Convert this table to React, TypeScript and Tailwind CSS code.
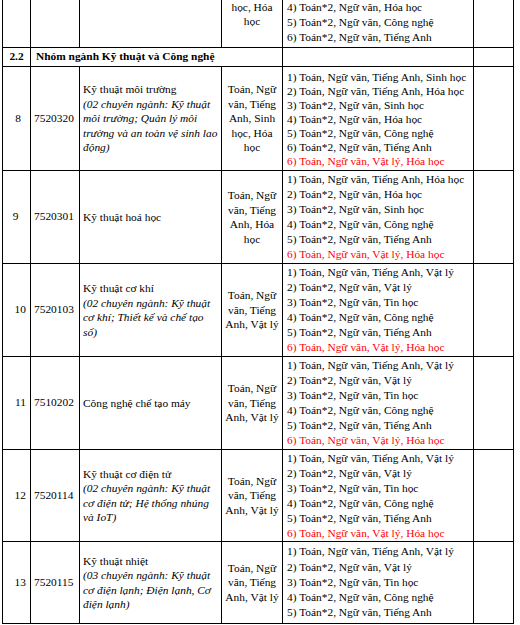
import React from 'react';
import { clsx } from 'clsx';

type Major = {
  no: string;
  numCls: string;
  code: string;
  name: string;
  note?: string[];
  group: string[];
  combos: string[];
  extra?: string;
  lead: string;
};

const tech = [
  '1) Toán, Ngữ văn, Tiếng Anh, Vật lý',
  '2) Toán*2, Ngữ văn, Vật lý',
  '3) Toán*2, Ngữ văn, Tin học',
  '4) Toán*2, Ngữ văn, Công nghệ',
  '5) Toán*2, Ngữ văn, Tiếng Anh',
];

const phys = ['Toán, Ngữ', 'văn, Tiếng', 'Anh, Vật lý'];
const red = '6) Toán, Ngữ văn, Vật lý, Hóa học';

const majors: Major[] = [
  {
    no: '8',
    numCls: 'items-center pl-[3px]',
    code: '7520320',
    name: 'Kỹ thuật môi trường',
    note: ['(02 chuyên ngành: Kỹ thuật', 'môi trường; Quản lý môi', 'trường và an toàn vệ sinh lao', 'động)'],
    group: ['Toán, Ngữ', 'văn, Tiếng', 'Anh, Sinh', 'học, Hóa', 'học'],
    combos: [
      '1) Toán, Ngữ văn, Tiếng Anh, Sinh học',
      '2) Toán, Ngữ văn, Tiếng Anh, Hóa học',
      '3) Toán*2, Ngữ văn, Sinh học',
      '4) Toán*2, Ngữ văn, Hóa học',
      '5) Toán*2, Ngữ văn, Công nghệ',
      '6) Toán*2, Ngữ văn, Tiếng Anh',
    ],
    extra: red,
    lead: 'leading-[14px]',
  },
  {
    no: '9',
    numCls: 'items-center pr-[2px]',
    code: '7520301',
    name: 'Kỹ thuật hoá học',
    group: ['Toán, Ngữ', 'văn, Tiếng', 'Anh, Hóa', 'học'],
    combos: [
      '1) Toán, Ngữ văn, Tiếng Anh, Hóa học',
      '2) Toán*2, Ngữ văn, Hóa học',
      '3) Toán*2, Ngữ văn, Sinh học',
      '4) Toán*2, Ngữ văn, Công nghệ',
      '5) Toán*2, Ngữ văn, Tiếng Anh',
    ],
    extra: red,
    lead: 'leading-[15px]',
  },
  {
    no: '10',
    numCls: 'items-end pr-[4px]',
    code: '7520103',
    name: 'Kỹ thuật cơ khí',
    note: ['(02 chuyên ngành: Kỹ thuật', 'cơ khí; Thiết kế và chế tạo', 'số)'],
    group: phys,
    combos: tech,
    extra: red,
    lead: 'leading-[15px]',
  },
  {
    no: '11',
    numCls: 'items-end pr-[4px]',
    code: '7510202',
    name: 'Công nghệ chế tạo máy',
    group: phys,
    combos: tech,
    extra: red,
    lead: 'leading-[15px]',
  },
  {
    no: '12',
    numCls: 'items-end pr-[4px]',
    code: '7520114',
    name: 'Kỹ thuật cơ điện tử',
    note: ['(02 chuyên ngành: Kỹ thuật', 'cơ điện tử; Hệ thống nhúng', 'và IoT)'],
    group: phys,
    combos: tech,
    extra: red,
    lead: 'leading-[15px]',
  },
  {
    no: '13',
    numCls: 'items-end pr-[4px]',
    code: '7520115',
    name: 'Kỹ thuật nhiệt',
    note: ['(03 chuyên ngành: Kỹ thuật', 'cơ điện lạnh; Điện lạnh, Cơ', 'điện lạnh)'],
    group: phys,
    combos: tech,
    lead: 'leading-[15.3px]',
  },
];

const Cell: React.FC<{ className?: string; children?: React.ReactNode }> = ({ className, children }) => (
  <div className={clsx('border-r border-b border-black flex flex-col justify-center', className)}>
    {children}
  </div>
);

const App: React.FC = () => {
  return (
    <div className="w-[520px] h-[625px] overflow-hidden bg-white pl-[2px] text-black font-['Liberation_Serif'] text-[11.4px]">
      <div className="grid w-fit grid-cols-[28px_49px_142px_61px_191px_40px] grid-rows-[48px_19px_104px_93px_93px_93px_92px_82px] border-l border-black">
        {/* tail of previous row */}
        <Cell />
        <Cell />
        <Cell />
        <Cell className="justify-start text-center leading-[14px]">
          <div>học, Hóa</div>
          <div>học</div>
        </Cell>
        <Cell className="justify-end pl-[4px] pb-[2px] leading-[15px]">
          <div>4) Toán*2, Ngữ văn, Hóa học</div>
          <div>5) Toán*2, Ngữ văn, Công nghệ</div>
          <div>6) Toán*2, Ngữ văn, Tiếng Anh</div>
        </Cell>
        <Cell />

        {/* group heading */}
        <Cell className="items-center font-bold">2.2</Cell>
        <Cell className="col-span-3 pl-[5px] font-bold">Nhóm ngành Kỹ thuật và Công nghệ</Cell>
        <Cell />
        <Cell />

        {majors.map((m) => (
          <React.Fragment key={m.no}>
            <Cell className={m.numCls}>{m.no}</Cell>
            <Cell className="pl-[3px]">{m.code}</Cell>
            <Cell className="pl-[3px] leading-[14.5px]">
              <div>{m.name}</div>
              {m.note?.map((l) => (
                <div key={l} className="italic">
                  {l}
                </div>
              ))}
            </Cell>
            <Cell className="text-center leading-[14.5px]">
              {m.group.map((l) => (
                <div key={l}>{l}</div>
              ))}
            </Cell>
            <Cell className={clsx('pl-[4px]', m.lead)}>
              {m.combos.map((l) => (
                <div key={l}>{l}</div>
              ))}
              {m.extra && <div className="text-[#ff0000]">{m.extra}</div>}
            </Cell>
            <Cell />
          </React.Fragment>
        ))}
      </div>
    </div>
  );
};

export default App;
